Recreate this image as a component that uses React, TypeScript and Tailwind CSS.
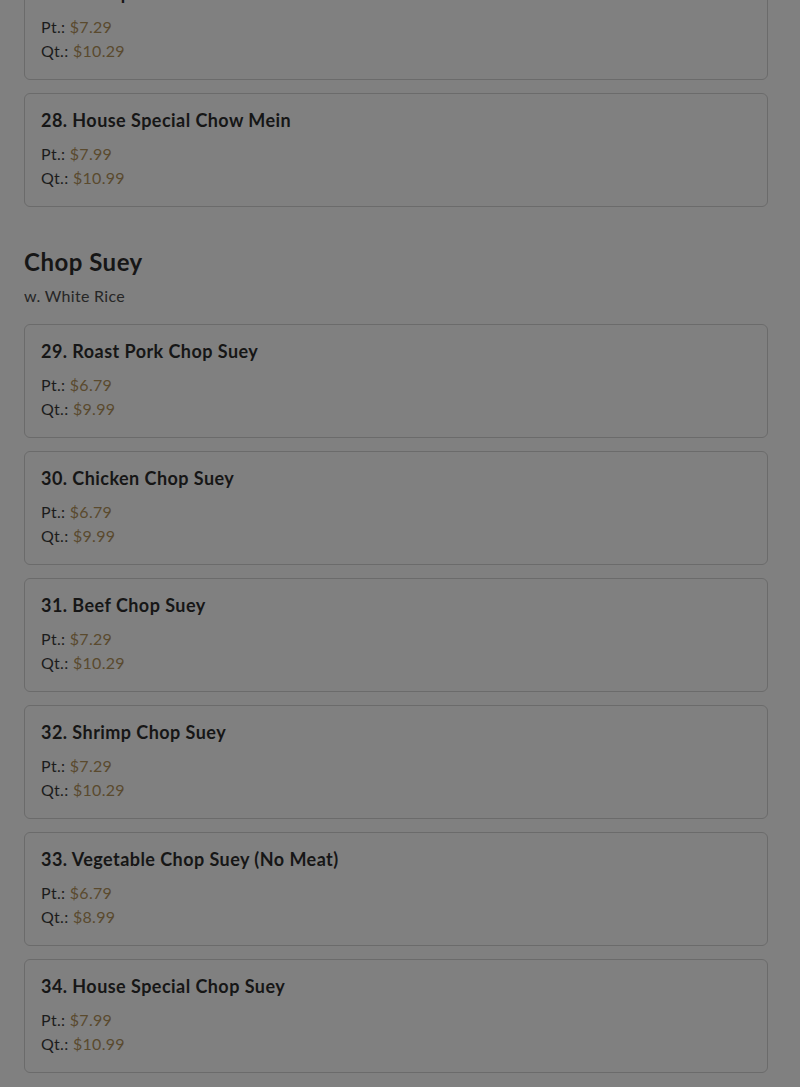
type Item = { name: string; pt: string; qt: string }

const chowMein: Item[] = [
    { name: "27. Shrimp Chow Mein", pt: "$7.29", qt: "$10.29" },
    { name: "28. House Special Chow Mein", pt: "$7.99", qt: "$10.99" },
]

const chopSuey: Item[] = [
    { name: "29. Roast Pork Chop Suey", pt: "$6.79", qt: "$9.99" },
    { name: "30. Chicken Chop Suey", pt: "$6.79", qt: "$9.99" },
    { name: "31. Beef Chop Suey", pt: "$7.29", qt: "$10.29" },
    { name: "32. Shrimp Chop Suey", pt: "$7.29", qt: "$10.29" },
    { name: "33. Vegetable Chop Suey (No Meat)", pt: "$6.79", qt: "$8.99" },
    { name: "34. House Special Chop Suey", pt: "$7.99", qt: "$10.99" },
]

const MenuCard = ({ item }: { item: Item }) => (
    <div className="border border-[#6b6b6b] rounded-md bg-[#808080] px-4 pt-[14px] pb-4">
        <h3 className="text-[18px] leading-6 font-bold tracking-[0.45px] text-[#161616] mb-[10px]">{item.name}</h3>
        <div className="text-base leading-6 tracking-[0.3px] text-[#1c1c1c]">
            Pt.: <span className="text-[#5a4a2e]">{item.pt}</span>
        </div>
        <div className="text-base leading-6 tracking-[0.3px] text-[#1c1c1c]">
            Qt.: <span className="text-[#5a4a2e]">{item.qt}</span>
        </div>
    </div>
)

const App = () => {
    return (
        <div className="min-h-screen h-[1087px] overflow-hidden bg-[#808080] font-['Lato','Noto_Sans',sans-serif]">
            <div className="pl-6 pr-8 -mt-[34px]">
                <div className="flex flex-col gap-[13px]">
                    {chowMein.map((item) => (
                        <MenuCard key={item.name} item={item} />
                    ))}
                </div>

                <div className="mt-[39px]">
                    <h2 className="text-2xl leading-8 font-bold tracking-[0.5px] text-[#161616]">Chop Suey</h2>
                    <p className="mt-[6px] text-base leading-6 tracking-[0.3px] text-[#262626]">w. White Rice</p>
                </div>

                <div className="mt-[16px] flex flex-col gap-[13px]">
                    {chopSuey.map((item) => (
                        <MenuCard key={item.name} item={item} />
                    ))}
                </div>
            </div>
        </div>
    )
}

export default App
